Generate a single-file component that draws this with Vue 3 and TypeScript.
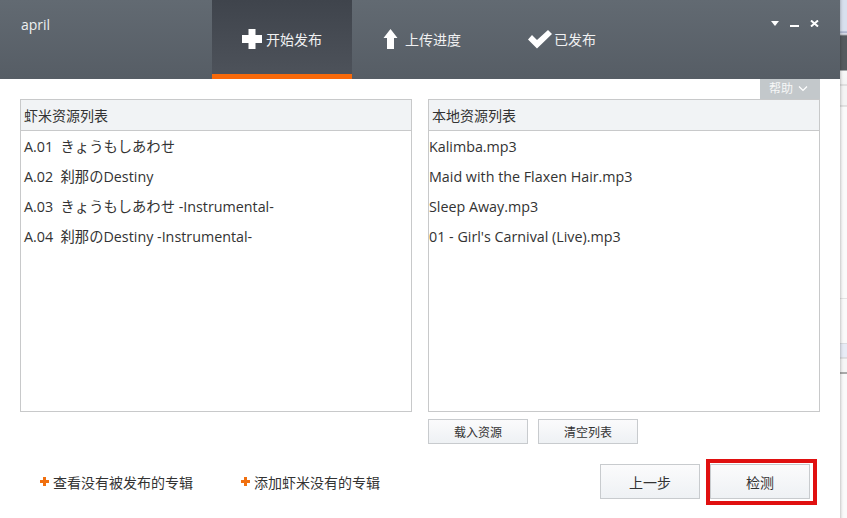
<script setup lang="ts">
const tabs = [
  { label: '开始发布', icon: 'plus', active: true },
  { label: '上传进度', icon: 'up', active: false },
  { label: '已发布', icon: 'check', active: false },
]
const remote = [
  'A.01\u00a0 きょうもしあわせ',
  'A.02\u00a0 刹那のDestiny',
  'A.03\u00a0 きょうもしあわせ -Instrumental-',
  'A.04\u00a0 刹那のDestiny -Instrumental-',
]
const local = [
  'Kalimba.mp3',
  'Maid with the Flaxen Hair.mp3',
  'Sleep Away.mp3',
  "01 - Girl's Carnival (Live).mp3",
]
</script>

<template>
  <div class="screen">
    <div class="window">
      <header class="top">
        <div class="user">april</div>
        <nav class="tabs">
          <div v-for="t in tabs" :key="t.label" class="tab" :class="[t.icon, { active: t.active }]">
            <svg v-if="t.icon === 'plus'" width="20" height="20" viewBox="0 0 20 20"><path d="M6.500 0h7v6h6.500v8h-6.500v6h-7v-6H0V6h6.500z" fill="#fff"/></svg>
            <svg v-else-if="t.icon === 'up'" width="15" height="20" viewBox="0 0 15 20"><path d="M7.500 0l7 9H11v11H4V9H.5z" fill="#fff"/></svg>
            <svg v-else width="24" height="19" viewBox="0 0 24 19"><path d="M0 9.500l4-4.500 5 5L20 0l4 4L9 18.500z" fill="#fff"/></svg>
            <span>{{ t.label }}</span>
          </div>
        </nav>
        <div class="winctl">
          <svg class="tri" width="8" height="5" viewBox="0 0 8 5"><path d="M0 0h8L4 5z" fill="#fff"/></svg>
          <svg width="9" height="2" viewBox="0 0 9 2"><path d="M0 0h9v2H0z" fill="#fff"/></svg>
          <svg width="9" height="7" viewBox="0 0 9 7"><path d="M1 .5l7 6M8 .5l-7 6" stroke="#fff" stroke-width="2"/></svg>
        </div>
      </header>
      <main class="body">
        <div class="help">帮助
          <svg width="10" height="6" viewBox="0 0 10 6"><path d="M1 .5l4 4 4-4" stroke="#fff" stroke-width="1.200" fill="none"/></svg>
        </div>
        <section class="lists">
          <div class="col">
            <div class="panel">
              <div class="phead">虾米资源列表</div>
              <ul class="rows remote">
                <li v-for="r in remote" :key="r">{{ r }}</li>
              </ul>
            </div>
          </div>
          <div class="col">
            <div class="panel">
              <div class="phead">本地资源列表</div>
              <ul class="rows">
                <li v-for="r in local" :key="r">{{ r }}</li>
              </ul>
            </div>
            <div class="smallbtns">
              <button class="btn small">载入资源</button>
              <button class="btn small">清空列表</button>
            </div>
          </div>
        </section>
        <footer class="foot">
          <div class="links">
            <a class="lnk"><svg width="9" height="9" viewBox="0 0 9 9"><path d="M3 0h3v3h3v3H6v3H3V6H0V3h3z" fill="#f07010"/></svg>查看没有被发布的专辑</a>
            <a class="lnk"><svg width="9" height="9" viewBox="0 0 9 9"><path d="M3 0h3v3h3v3H6v3H3V6H0V3h3z" fill="#f07010"/></svg>添加虾米没有的专辑</a>
          </div>
          <div class="actions">
            <button class="btn big">上一步</button>
            <div class="markwrap">
              <button class="btn big">检测</button>
              <div class="mark"></div>
            </div>
          </div>
        </footer>
      </main>
    </div>
    <div class="strip"></div>
  </div>
</template>

<style>
html, body { margin: 0; background: #fff; overflow: hidden; }
</style>

<style scoped>
.screen {
  width: 847px; height: 518px; overflow: hidden; display: flex; background: #fff;
  font-family: "Liberation Sans", "Noto Sans CJK SC", sans-serif;
}
.window { width: 840px; height: 518px; flex: none; background: #fff; }
.strip {
  width: 7px; height: 518px; flex: none;
  background:
    linear-gradient(90deg, rgba(0,0,0,.18), rgba(0,0,0,.04) 2px, rgba(0,0,0,0) 4px),
    linear-gradient(#d8e0ee 0, #d8e0ee 31px, #9aa3c0 32px, #e8ebf2 34px, #555a5e 36px, #555a5e 70px, #f8f8f8 71px, #f4f4f4 84px, #ccc 85px, #f4f4f4 86px, #f4f4f4 105px, #ccc 106px, #fafafa 107px, #fafafa 298px, #ccc 298px, #fafafa 299px, #fafafa 343px, #ccc 343px, #e8ecf6 344px, #e8ecf6 357px, #ccc 358px, #f6f6f6 359px, #f6f6f6 372px, #aaa 372px, #aaa 374px, #fafafa 374px);
}
.top {
  height: 79px; display: flex; background: linear-gradient(#626a72, #565d65);
  color: #fff;
}
.user { width: 212px; flex: none; padding: 16px 0 0 21px; box-sizing: border-box; font-family: "Open Sans", sans-serif; font-size: 14px; line-height: 18px; color: #eef0f1; }
.tabs { display: flex; flex: none; width: 420px; }
.tab {
  width: 140px; height: 79px; flex: none; box-sizing: border-box; padding-top: 29px;
  display: flex; align-items: flex-start; justify-content: center; gap: 4px;
  font-size: 14px; line-height: 22px; color: #f0f1f2;
}
.tab svg { flex: none; }
.tab.up { gap: 7px; }
.tab.check { gap: 2px; }
.tab.check svg { margin-top: 1px; }
.tab.active { background: linear-gradient(#3f444c, #4d525a); border-bottom: 5px solid #f8690a; }
.winctl { flex: 1; display: flex; align-items: flex-end; height: 7px; margin-top: 20px; padding-left: 139px; gap: 11px; }
.tri { margin-bottom: 1px; }
.body { position: relative; height: 439px; }
.help {
  position: absolute; left: 760px; top: 0; width: 60px; height: 20px; background: #c3c8cb;
  color: #f6f7f7; font-size: 12px; line-height: 20px; padding-left: 9px; box-sizing: border-box;
  display: flex; align-items: center; gap: 5px;
}
.lists { display: flex; gap: 16px; padding: 20px 20px 0; }
.col { width: 392px; }
.panel { height: 313px; border: 1px solid #c8c9ca; box-sizing: border-box; }
.phead {
  height: 31px; background: #f1f3f5; border-bottom: 1px solid #c8c9ca; box-sizing: border-box;
  padding-left: 3px; font-size: 14px; line-height: 32px; color: #333;
}
.rows { list-style: none; margin: 0; padding: 1px 0 0 0; font-family: "Open Sans", "Noto Sans CJK JP", sans-serif; font-size: 14.300px; color: #333; }
.rows.remote { padding-left: 3px; }
.rows li { height: 30px; line-height: 30px; white-space: nowrap; }
.smallbtns { display: flex; gap: 10px; margin-top: 7px; }
.btn {
  padding: 0; font-family: inherit; color: #333; font-size: 12px;
  background: linear-gradient(#fbfbfc, #eef1f4); border: 1px solid #c8cbce; box-sizing: border-box;
}
.small { width: 100px; height: 25px; }
.big { width: 100px; height: 35px; font-size: 14px; display: block; }
.foot { display: flex; justify-content: space-between; align-items: center; padding: 0 30px 0 40px; margin-top: 20px; height: 35px; }
.links { display: flex; gap: 48px; }
.lnk { display: flex; align-items: center; gap: 4px; font-size: 14px; color: #333; }
.actions { display: flex; align-items: center; gap: 10px; }
.markwrap { position: relative; }
.mark { position: absolute; left: -4px; top: -5px; right: -7px; bottom: -6px; border: 4px solid #e01010; pointer-events: none; }
</style>
